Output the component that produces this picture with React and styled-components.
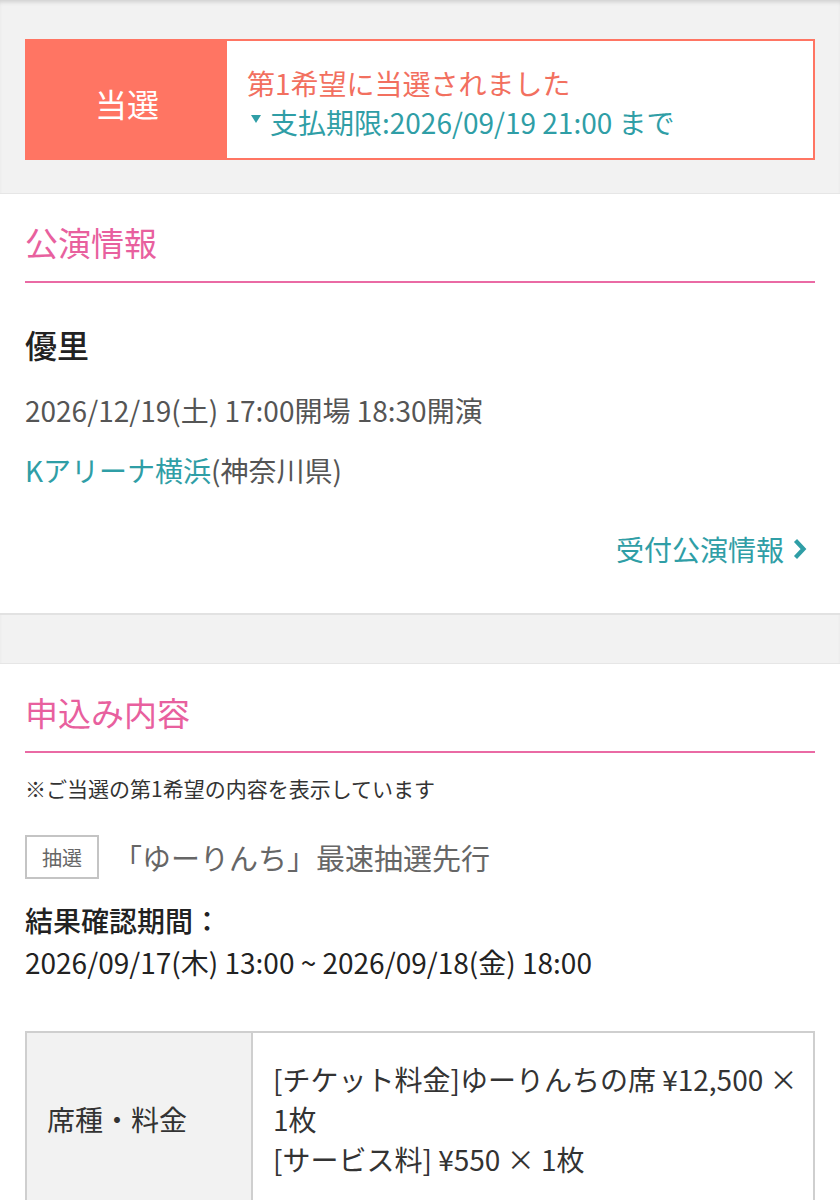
import React from "react";
import styled, { createGlobalStyle } from "styled-components";

const GlobalStyle = createGlobalStyle`
  html, body {
    margin: 0;
    padding: 0;
    background: #f2f2f2;
    font-family: "Noto Sans CJK JP", "Noto Sans", sans-serif;
    color: #333;
  }
`;

const Page = styled.div`
  width: 840px;
  background: #f2f2f2;
  box-shadow: inset 0 4px 4px -2px rgba(0, 0, 0, 0.15);
`;

const Top = styled.div`
  padding: 39px 25px 33px;
`;

const Banner = styled.div`
  display: flex;
  height: 117px;
  border: 2px solid #ff7563;
  background: #fff;
`;

const Status = styled.div`
  width: 200px;
  background: #ff7563;
  color: #fff;
  font-size: 32px;
  padding-top: 6px;
  display: flex;
  align-items: center;
  justify-content: center;
`;

const Message = styled.div`
  flex: 1;
  padding: 6px 20px 0;
  display: flex;
  flex-direction: column;
  justify-content: center;
  font-size: 28px;
  line-height: 39px;
`;

const Won = styled.div`
  color: #f2705f;
`;

const Deadline = styled.div`
  color: #2f9ea6;
  display: flex;
  align-items: center;
`;

const Caret = styled.span`
  display: inline-block;
  width: 0;
  height: 0;
  border-left: 5px solid transparent;
  border-right: 5px solid transparent;
  border-top: 8px solid #2f9ea6;
  margin: 0 9px 0 4px;
  transform: translateY(-3px);
`;

const Section = styled.section`
  background: #fff;
  border-top: 1px solid #e6e6e6;
  border-bottom: 2px solid #e2e2e2;
  padding: 0 25px ${(p) => p.$bottom || 0}px;
  margin-bottom: ${(p) => p.$gap || 0}px;
`;

const Heading = styled.h2`
  margin: 0;
  padding: 23px 0 14px;
  font-size: 33px;
  font-weight: 400;
  line-height: 50px;
  color: #e8609e;
  border-bottom: 2px solid #ea6aa4;
`;

const Artist = styled.div`
  margin-top: 39px;
  font-size: 32px;
  font-weight: 500;
  color: #222;
  line-height: 44px;
`;

const Line = styled.div`
  font-size: 28px;
  line-height: 40px;
  color: ${(p) => p.$color || "#555"};
  margin-top: ${(p) => p.$top || 0}px;
  font-weight: ${(p) => p.$weight || 400};
`;

const Teal = styled.span`
  color: #2f9ea6;
`;

const MoreLink = styled.a`
  display: flex;
  justify-content: flex-end;
  align-items: center;
  gap: 9px;
  margin-top: 39px;
  padding-right: 8px;
  font-size: 28px;
  line-height: 40px;
  color: #2f9ea6;
  text-decoration: none;
`;

const Note = styled.div`
  margin-top: 20px;
  font-size: 21px;
  line-height: 30px;
  color: #333;
`;

const TypeRow = styled.div`
  display: flex;
  align-items: center;
  gap: 22px;
  margin-top: 32px;
`;

const Badge = styled.span`
  box-sizing: border-box;
  width: 74px;
  height: 44px;
  border: 2px solid #c4c4c4;
  display: flex;
  align-items: center;
  justify-content: center;
  font-size: 20px;
  color: #666;
`;

const TypeName = styled.span`
  font-size: 29px;
  color: #666;
  margin-left: -8px;
`;

const Table = styled.div`
  display: grid;
  grid-template-columns: 226px 1fr;
  border: 2px solid #cfcfcf;
  margin-top: 49px;
`;

const HeadCell = styled.div`
  background: #f2f2f2;
  border-right: 2px solid #cfcfcf;
  display: flex;
  align-items: center;
  padding-left: 20px;
  font-size: 28px;
  color: #333;
`;

const BodyCell = styled.div`
  padding: 26px 8px 26px 20px;
  font-size: 28px;
  line-height: 40px;
  color: #333;
`;

function Chevron() {
  return (
    <svg width="14" height="22" viewBox="0 0 14 22">
      <path d="M2.5 2.5 L10.5 11 L2.5 19.5" fill="none" stroke="#2f9ea6" strokeWidth="4.2" />
    </svg>
  );
}

export default function App() {
  return (
    <>
      <GlobalStyle />
      <Page>
        <Top>
          <Banner>
            <Status>当選</Status>
            <Message>
              <Won>第1希望に当選されました</Won>
              <Deadline>
                <Caret />
                支払期限:2026/09/19 21:00 まで
              </Deadline>
            </Message>
          </Banner>
        </Top>

        <Section $bottom={44} $gap={48}>
          <Heading>公演情報</Heading>
          <Artist>優里</Artist>
          <Line $top={24}>2026/12/19(土) 17:00開場 18:30開演</Line>
          <Line $top={20}>
            <Teal>Kアリーナ横浜</Teal>(神奈川県)
          </Line>
          <MoreLink href="#">
            受付公演情報
            <Chevron />
          </MoreLink>
        </Section>

        <Section $bottom={40}>
          <Heading>申込み内容</Heading>
          <Note>※ご当選の第1希望の内容を表示しています</Note>
          <TypeRow>
            <Badge>抽選</Badge>
            <TypeName>「ゆーりんち」最速抽選先行</TypeName>
          </TypeRow>
          <Line $top={21} $color="#222" $weight={500}>結果確認期間：</Line>
          <Line $top={2} $color="#222">2026/09/17(木) 13:00 ~ 2026/09/18(金) 18:00</Line>
          <Table>
            <HeadCell>席種・料金</HeadCell>
            <BodyCell>
              [チケット料金]ゆーりんちの席 ¥12,500{"\u00a0"}×
              <br />
              1枚
              <br />
              [サービス料] ¥550 × 1枚
            </BodyCell>
          </Table>
        </Section>
      </Page>
    </>
  );
}
